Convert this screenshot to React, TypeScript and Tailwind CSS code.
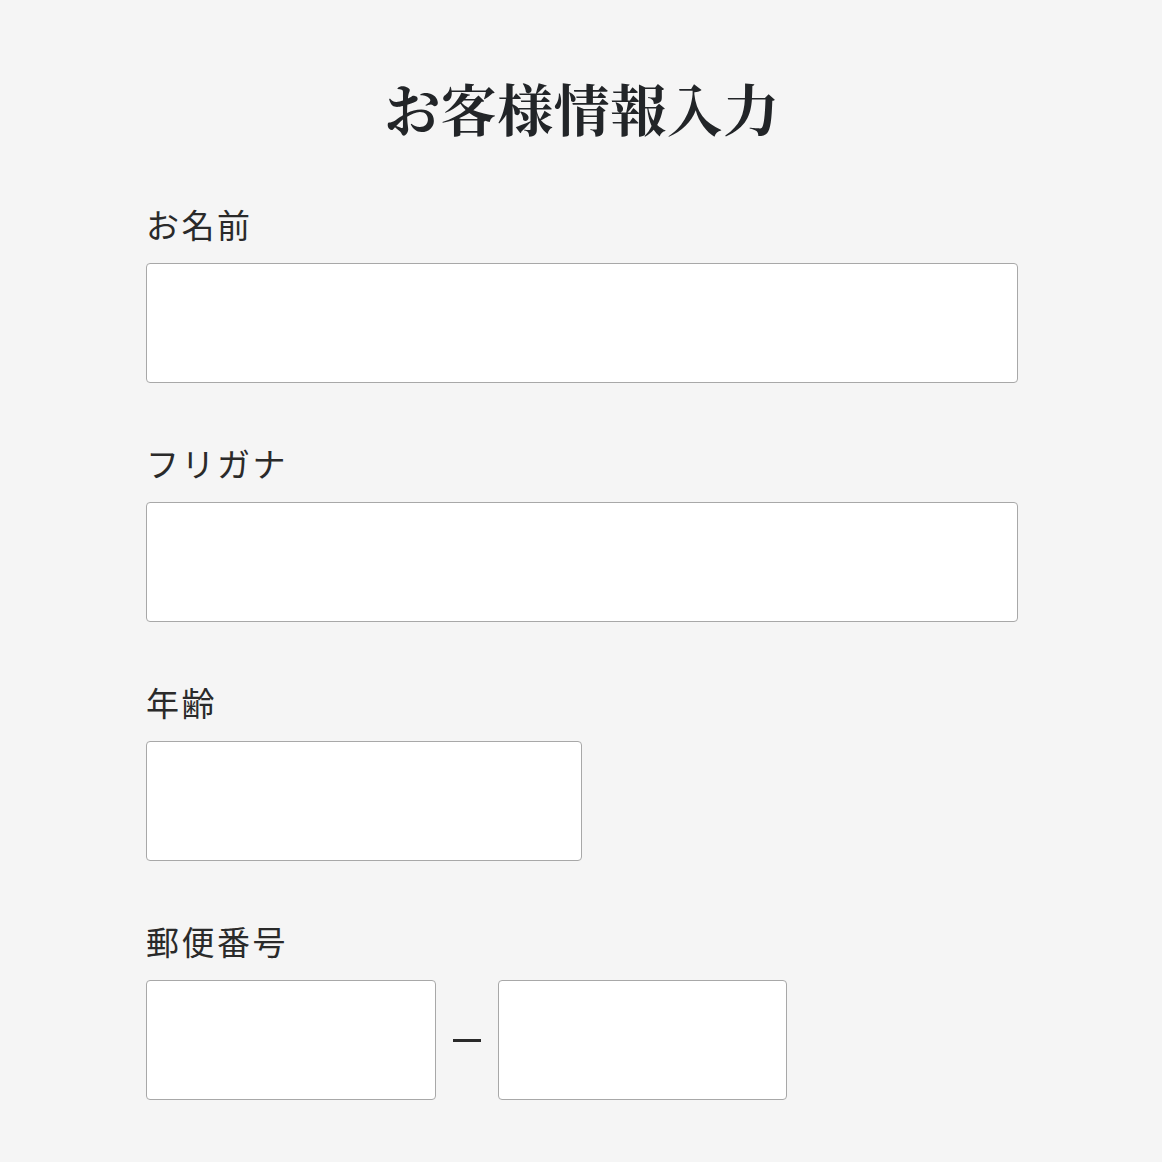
const sansJp = "font-['Noto_Sans_CJK_JP','Noto_Sans',sans-serif]";

function Field({ label, children }: { label: string; children: React.ReactNode }) {
  return (
    <div className="flex flex-col">
      <label className={`${sansJp} text-[33px] leading-[44px] tracking-[2.5px] text-[#2a2a2a]`}>{label}</label>
      <div className="mt-[17px]">{children}</div>
    </div>
  );
}

function Box({ className = "" }: { className?: string }) {
  return (
    <input
      type="text"
      className={`block h-[120px] rounded-[4px] border border-[#a8a8a8] bg-white px-4 text-[28px] outline-none ${className}`}
    />
  );
}

export default function App() {
  return (
    <div className="min-h-[1162px] w-full bg-[#f5f5f5]">
      <div className="ml-[146px] w-[872px] pt-[65px]">
        <h1 className="text-center font-['Noto_Serif_CJK_JP','Noto_Serif_JP','Liberation_Serif',serif] text-[56px] font-bold leading-[84px] tracking-[0.5px] text-[#222528]">
          お客様情報入力
        </h1>
        <div className="mt-[53px] flex flex-col gap-[58px]">
          <Field label="お名前">
            <Box className="w-[872px]" />
          </Field>
          <Field label="フリガナ">
            <Box className="w-[872px]" />
          </Field>
          <Field label="年齢">
            <Box className="w-[436px]" />
          </Field>
          <Field label="郵便番号">
            <div className="flex items-center">
              <Box className="w-[290px]" />
              <div className="flex w-[62px] justify-center">
                <div className="h-[3px] w-[28px] bg-[#2a2a2a]" />
              </div>
              <Box className="w-[289px]" />
            </div>
          </Field>
        </div>
      </div>
    </div>
  );
}
